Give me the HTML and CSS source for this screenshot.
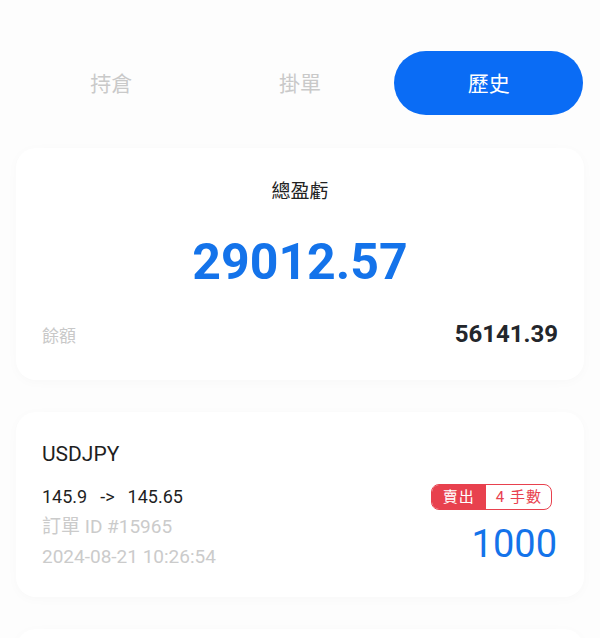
FILE: index.html
```html
<!DOCTYPE html>
<html lang="zh-Hant">
<head>
  <meta charset="UTF-8">
  <meta name="viewport" content="width=device-width, initial-scale=1.0">
  <title>交易紀錄</title>
  <link rel="stylesheet" href="styles.css">
</head>
<body>

  <div class="page">
    <div class="tabs">
      <div class="tab">持倉</div>
      <div class="tab">掛單</div>
      <div class="tab active">歷史</div>
    </div>

    <div class="card summary">
      <div class="summary-title">總盈虧</div>
      <div class="summary-total">29012.57</div>
      <div class="balance-row">
        <span class="balance-label">餘額</span>
        <span class="balance-value">56141.39</span>
      </div>
    </div>

    <div class="card order">
      <div class="order-symbol">USDJPY</div>
      <div class="order-body">
        <div class="order-info">
          <div class="order-price">145.9<span class="arrow">-&gt;</span>145.65</div>
          <div class="order-meta">訂單 ID #15965</div>
          <div class="order-meta">2024-08-21 10:26:54</div>
        </div>
        <div class="order-side">
          <div class="badge">
            <span class="badge-type">賣出</span>
            <span class="badge-lots">4 手數</span>
          </div>
          <div class="order-amount">1000</div>
        </div>
      </div>
    </div>

    <div class="card order"></div>
  </div>

</body>
</html>
```

FILE: styles.css
```css
body {
  margin: 0;
  background: #fdfdfd;
  font-family: Roboto, "Noto Sans CJK TC", sans-serif;
  color: #1f1f1f;
}
.page {
  padding: 51px 16px 0;
}
.tabs {
  display: grid;
  grid-template-columns: 1fr 1fr 1fr;
  margin: 0 1px;
}
.tab {
  height: 64px;
  display: flex;
  align-items: center;
  justify-content: center;
  font-size: 21px;
  color: #c9c9c9;
  border-radius: 32px;
  padding-bottom: 3px;
  box-sizing: border-box;
}
.tab.active {
  background: #0a6cf5;
  color: #fff;
}
.card {
  background: #fff;
  border-radius: 20px;
  box-shadow: 0 2px 12px rgba(0, 0, 0, 0.025);
  margin-top: 32px;
}
.summary {
  margin-top: 33px;
  height: 232px;
  box-sizing: border-box;
  padding: 30px 26px 0;
}
.summary-title {
  text-align: center;
  font-size: 19px;
  color: #222;
  line-height: 28px;
}
.summary-total {
  text-align: center;
  font-size: 50px;
  font-weight: 700;
  color: #1473ea;
  line-height: 60px;
  margin-top: 26px;
}
.balance-row {
  display: flex;
  justify-content: space-between;
  align-items: center;
  margin-top: 28px;
}
.balance-label {
  font-size: 17px;
  color: #c8c8c8;
}
.balance-value {
  font-size: 24px;
  font-weight: 700;
  color: #23262b;
}
.order {
  height: 185px;
  box-sizing: border-box;
  padding: 28px 26px 0;
}
.order-symbol {
  font-size: 21px;
  line-height: 28px;
}
.order-body {
  display: flex;
  justify-content: space-between;
  margin-top: 14px;
}
.order-price {
  font-size: 18px;
  line-height: 30px;
  color: #1f1f1f;
}
.arrow {
  margin: 0 13px;
}
.order-meta {
  font-size: 19px;
  line-height: 30px;
  color: #cbcbcb;
}
.order-side {
  display: flex;
  flex-direction: column;
  align-items: flex-end;
}
.badge {
  display: flex;
  border: 1.5px solid #e8414e;
  border-radius: 8px;
  overflow: hidden;
  font-size: 15px;
  line-height: 24px;
  margin-top: 2px;
  margin-right: 6px;
}
.badge-type {
  background: #e8414e;
  color: #fff;
  padding: 0 11px;
  letter-spacing: 1px;
}
.badge-lots {
  color: #e8414e;
  padding: 0 9px 0 10px;
  letter-spacing: 1px;
}
.order-amount {
  font-size: 38px;
  line-height: 44px;
  color: #1473ea;
  margin-top: 12px;
  margin-right: 1px;
}
```
